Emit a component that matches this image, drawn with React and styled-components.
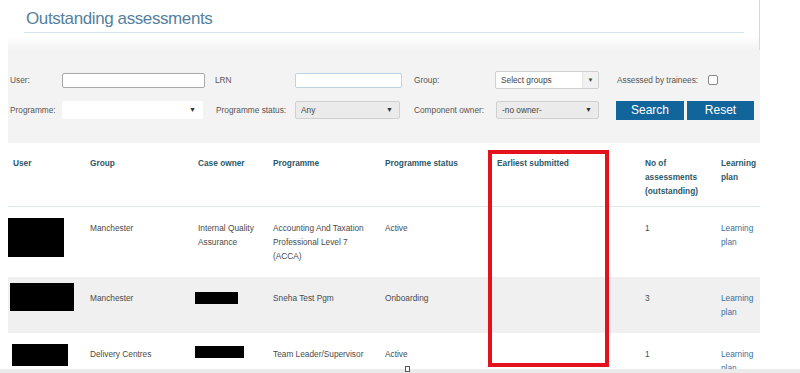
import React from 'react';
import styled, { createGlobalStyle } from 'styled-components';

const GlobalStyle = createGlobalStyle`
  * {
    margin: 0;
    padding: 0;
    box-sizing: border-box;
  }

  body {
    background: #fff;
    font-family: 'Liberation Sans', Arial, sans-serif;
    overflow: hidden;
  }
`;

const COLORS = {
  title: '#557f9e',
  rule: '#d5e3ec',
  panel: '#f3f3f3',
  label: '#555',
  text: '#4a4a4a',
  header: '#2d5868',
  link: '#3d6f9c',
  button: '#11659a',
  stripe: '#f0f0f0',
  red: '#e3121d',
};

const Page = styled.div`
  position: relative;
  width: 800px;
  height: 373px;
  padding-left: 8px;
`;

const TitleBar = styled.div`
  width: 752px;
  height: 50px;
  padding: 0 15px 0 16px;
  border-right: 1px solid #cfdbe4;
  background: linear-gradient(to bottom, #fff 36px, ${COLORS.panel} 50px);
`;

const Title = styled.h1`
  font-size: 17px;
  font-weight: normal;
  letter-spacing: -0.4px;
  line-height: 20px;
  color: ${COLORS.title};
  padding: 9px 0 3px 2px;
  border-bottom: 1px solid ${COLORS.rule};
`;

const FilterPanel = styled.div`
  width: 752px;
  background: ${COLORS.panel};
  padding: 20px 0 23px 2px;
  display: flex;
  flex-direction: column;
  gap: 10px;
`;

const FilterRow = styled.div`
  display: flex;
  align-items: center;
  height: 20px;
`;

const Label = styled.label`
  width: ${(p) => (p.$w ? `${p.$w}px` : 'auto')};
  margin-left: ${(p) => p.$ml || 0}px;
  font-size: 8.3px;
  color: ${COLORS.label};
  white-space: nowrap;
`;

const TextInput = styled.div`
  width: ${(p) => p.$w}px;
  height: 15px;
  background: #fff;
  border: 1px solid ${(p) => p.$border};
  border-radius: 2px;
`;

const Select = styled.div`
  position: relative;
  width: ${(p) => p.$w}px;
  height: 18px;
  display: flex;
  align-items: center;
  padding-left: 5px;
  font-size: 8.3px;
  color: #444;
  background: ${(p) => (p.$grey ? '#ebebeb' : '#fff')};
  border: 1px solid ${(p) => (p.$plain ? 'transparent' : '#cfcfcf')};
  border-radius: 2px;
`;

const Arrow = styled.span`
  position: absolute;
  right: 6px;
  top: 4px;
  font-size: 7px;
  color: #333;
`;

const ArrowBox = styled.span`
  position: absolute;
  right: 0;
  top: 0;
  bottom: 0;
  width: 16px;
  background: #f1f1f1;
  border-left: 1px solid #e4e4e4;
  display: flex;
  align-items: center;
  justify-content: center;
  font-size: 6px;
  color: #444;
`;

const Checkbox = styled.span`
  width: 10px;
  height: 10px;
  margin-left: 10px;
  background: #fff;
  border: 1px solid #888;
  border-radius: 2px;
`;

const Buttons = styled.div`
  display: flex;
  gap: 3px;
  margin-left: 17px;
`;

const Button = styled.button`
  width: ${(p) => p.$w}px;
  height: 19px;
  border: none;
  background: ${COLORS.button};
  color: #fff;
  font-family: 'Liberation Sans', Arial, sans-serif;
  font-size: 12px;
`;

const Table = styled.table`
  width: 752px;
  margin-top: 1px;
  border-collapse: collapse;
  table-layout: fixed;
`;

const Th = styled.th`
  text-align: left;
  vertical-align: top;
  padding: 12px 6px 8px 5px;
  font-size: 8.3px;
  line-height: 14px;
  font-weight: bold;
  color: ${COLORS.header};
  border-bottom: 1px solid #dde9f0;
`;

const Tr = styled.tr`
  background: ${(p) => (p.$striped ? COLORS.stripe : '#fff')};
`;

const Td = styled.td`
  vertical-align: top;
  padding: 14px 6px 14px 5px;
  font-size: 8.3px;
  line-height: 14px;
  color: ${COLORS.text};
`;

const Link = styled.a`
  color: ${COLORS.link};
  text-decoration: none;
`;

const Redacted = styled.span`
  display: block;
  width: ${(p) => p.$w}px;
  height: ${(p) => p.$h}px;
  margin: ${(p) => p.$mt}px 0 0 ${(p) => p.$ml}px;
  background: #000;
`;

const Highlight = styled.div`
  position: absolute;
  left: 488px;
  top: 150px;
  width: 121px;
  height: 217px;
  border: 4px solid ${COLORS.red};
`;

const BottomBar = styled.div`
  position: fixed;
  left: 0;
  right: 0;
  bottom: 0;
  height: 4px;
  background: #ebebeb;
`;

const Grip = styled.span`
  position: absolute;
  left: 405px;
  top: -3px;
  width: 5px;
  height: 6px;
  border: 1px solid #555;
  background: #fff;
`;

const columns = [77, 108, 75, 112, 112, 148, 76, 44];

const rows = [
  {
    user: { w: 56, h: 39, mt: -3, ml: -5 },
    group: 'Manchester',
    owner: 'Internal Quality Assurance',
    programme: 'Accounting And Taxation Professional Level 7 (ACCA)',
    status: 'Active',
    count: 1,
  },
  {
    user: { w: 64, h: 28, mt: -8, ml: -3 },
    group: 'Manchester',
    ownerBox: { w: 43, h: 12, mt: 1, ml: -3 },
    programme: 'Sneha Test Pgm',
    status: 'Onboarding',
    count: 3,
    striped: true,
  },
  {
    user: { w: 56, h: 22, mt: -3, ml: -1 },
    group: 'Delivery Centres',
    ownerBox: { w: 49, h: 12, mt: -1, ml: -3 },
    programme: 'Team Leader/Supervisor',
    status: 'Active',
    count: 1,
  },
];

const box = (b) => <Redacted $w={b.w} $h={b.h} $mt={b.mt} $ml={b.ml} />;

const App = () => {
  return (
    <>
      <GlobalStyle />
      <Page>
        <TitleBar>
          <Title>Outstanding assessments</Title>
        </TitleBar>

        <FilterPanel>
          <FilterRow>
            <Label $w={52}>User:</Label>
            <TextInput $w={143} $border='#a8a8a8' />
            <Label $w={80} $ml={10}>LRN</Label>
            <TextInput $w={107} $border='#bcd3e3' />
            <Label $w={81} $ml={12}>Group:</Label>
            <Select $w={104}>
              Select groups
              <ArrowBox>▼</ArrowBox>
            </Select>
            <Label $ml={18}>Assessed by trainees:</Label>
            <Checkbox />
          </FilterRow>

          <FilterRow>
            <Label $w={52}>Programme:</Label>
            <Select $w={141} $plain>
              <Arrow>▼</Arrow>
            </Select>
            <Label $w={79} $ml={13}>Programme status:</Label>
            <Select $w={105} $grey>
              Any
              <Arrow>▼</Arrow>
            </Select>
            <Label $w={82} $ml={14}>Component owner:</Label>
            <Select $w={103} $grey>
              -no owner-
              <Arrow>▼</Arrow>
            </Select>
            <Buttons>
              <Button $w={68}>Search</Button>
              <Button $w={67}>Reset</Button>
            </Buttons>
          </FilterRow>
        </FilterPanel>

        <Table>
          <colgroup>
            {columns.map((w, i) => (
              <col key={i} style={{ width: w }} />
            ))}
          </colgroup>
          <thead>
            <tr>
              <Th>User</Th>
              <Th>Group</Th>
              <Th>Case owner</Th>
              <Th>Programme</Th>
              <Th>Programme status</Th>
              <Th>Earliest submitted</Th>
              <Th>No of assessments (outstanding)</Th>
              <Th>Learning plan</Th>
            </tr>
          </thead>
          <tbody>
            {rows.map((r, i) => (
              <Tr key={i} $striped={r.striped}>
                <Td>{box(r.user)}</Td>
                <Td>{r.group}</Td>
                <Td>{r.ownerBox ? box(r.ownerBox) : r.owner}</Td>
                <Td>{r.programme}</Td>
                <Td>{r.status}</Td>
                <Td />
                <Td>{r.count}</Td>
                <Td>
                  <Link href='#'>Learning plan</Link>
                </Td>
              </Tr>
            ))}
          </tbody>
        </Table>

        <Highlight />
      </Page>
      <BottomBar>
        <Grip />
      </BottomBar>
    </>
  );
};

export default App;
